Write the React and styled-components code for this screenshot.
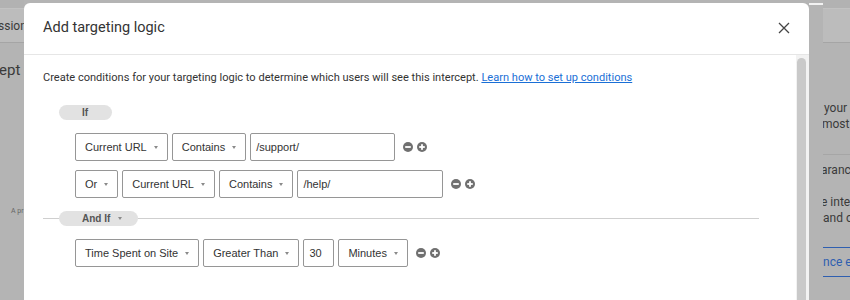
import React from 'react';
import styled, { createGlobalStyle } from 'styled-components';

const GlobalStyle = createGlobalStyle`
  html, body {
    margin: 0;
    padding: 0;
    background: #b4b4b4;
    overflow: hidden;
  }
  * { box-sizing: border-box; }
`;

const Page = styled.div`
  display: flex;
  width: 850px;
  height: 300px;
  overflow: hidden;
  background: #b4b4b4;
  font-family: Roboto, "Liberation Sans", sans-serif;
`;

// dimmed page behind the dialog
const BackStrip = styled.div`
  width: ${(p) => p.width}px;
  flex: ${(p) => (p.grow ? 1 : 'none')};
  display: flex;
  flex-direction: column;
  overflow: hidden;
  color: #3a3a3a;
  white-space: nowrap;
`;

const BackTopBand = styled.div`
  height: 9px;
  background: #b2b2b2;
  border-bottom: 1px solid #c2c2c2;
`;

const BackHeader = styled.div`
  height: 34px;
  display: flex;
  align-items: center;
  background: #bcbcbc;
  border-bottom: 1px solid #a5a5a5;
  font-size: 12px;
`;

const BackText = styled.div`
  font-size: ${(p) => p.size || 12}px;
  line-height: ${(p) => p.lh || 16}px;
  margin-top: ${(p) => p.mt || 0}px;
  margin-left: ${(p) => p.ml || 0}px;
  color: ${(p) => p.color || '#3a3a3a'};
`;

const BackRule = styled.div`
  height: 1px;
  background: ${(p) => p.color || '#a6a6a6'};
  margin-top: ${(p) => p.mt || 0}px;
`;

const CenterCol = styled.div`
  width: 785px;
  display: flex;
  flex-direction: column;
  padding-top: 3px;
`;

const Modal = styled.div`
  flex: 1;
  background: #fff;
  border-radius: 6px 6px 0 0;
  display: flex;
  flex-direction: column;
`;

const ModalHeader = styled.div`
  height: 52px;
  display: flex;
  align-items: center;
  justify-content: space-between;
  padding: 0 18px 0 19px;
  border-bottom: 1px solid #e6e6e6;
`;

const Title = styled.h2`
  margin: 0;
  font-size: 14.5px;
  font-weight: 400;
  color: #333;
  margin-top: -2px;
`;

const CloseBtn = styled.button`
  border: none;
  background: none;
  padding: 0;
  width: 14px;
  height: 14px;
  display: flex;
  align-items: center;
  justify-content: center;
  margin-top: -2px;
  cursor: pointer;
`;

const ModalBody = styled.div`
  flex: 1;
  display: flex;
`;

const Content = styled.div`
  flex: 1;
  padding: 15px 37px 0 19px;
`;

const Description = styled.p`
  margin: 0;
  font-size: 11.05px;
  line-height: 16px;
  color: #333;

  a {
    color: #1a6fd6;
    text-decoration: underline;
  }
`;

const Pill = styled.div`
  display: inline-flex;
  align-items: center;
  gap: 8px;
  height: 15px;
  padding: 0 ${(p) => p.pr}px 0 23px;
  border-radius: 8px;
  background: #e2e2e2;
  font-family: "Liberation Sans", Arial, sans-serif;
  font-weight: 700;
  font-size: 10px;
  color: #555;
`;

const PillRow = styled.div`
  margin: ${(p) => p.mt}px 0 0 16px;
  display: flex;
`;

const Divider = styled.div`
  margin-top: 13px;
  display: flex;
  padding-left: 16px;
  background: linear-gradient(#cfcfcf, #cfcfcf) left center / 100% 1px no-repeat;
`;

const Group = styled.div`
  margin: 13px 0 0 32px;
  display: flex;
  flex-direction: column;
  gap: 9px;
`;

const Row = styled.div`
  display: flex;
  align-items: center;
  gap: 4px;
  height: 28px;
`;

const Select = styled.div`
  height: 100%;
  display: flex;
  align-items: center;
  gap: 7px;
  padding: 0 9px 0 9px;
  border: 1px solid #969696;
  border-radius: 2px;
  font-family: "Liberation Sans", Arial, sans-serif;
  font-size: 11px;
  color: #333;
  white-space: nowrap;
`;

const Caret = styled.span`
  width: 0;
  height: 0;
  border-left: 2.5px solid transparent;
  border-right: 2.5px solid transparent;
  border-top: 3px solid #8a8a8a;
`;

const Input = styled.div`
  width: ${(p) => p.width}px;
  flex: none;
  height: 100%;
  display: flex;
  align-items: center;
  padding-left: 5px;
  border: 1px solid #969696;
  border-radius: 2px;
  font-family: "Liberation Sans", Arial, sans-serif;
  font-size: 11px;
  color: #333;
`;

const Actions = styled.div`
  display: flex;
  align-items: center;
  gap: 4px;
  margin-left: 4px;
`;

const ScrollTrack = styled.div`
  width: ${(p) => p.width}px;
  display: flex;
  padding: ${(p) => p.pad};
  background: #f2f2f2;
`;

const Thumb = styled.div`
  flex: 1;
  background: #c9c9c9;
  border-radius: 5px 5px 0 0;
`;

const OuterCol = styled.div`
  width: 14px;
  display: flex;
  flex-direction: column;
  padding-top: 3px;
`;

const Minus = () => (
  <svg width="10" height="10" viewBox="0 0 10 10">
    <circle cx="5" cy="5" r="5" fill="#707070" />
    <rect x="2.2" y="4.1" width="5.6" height="1.8" fill="#fff" />
  </svg>
);

const Plus = () => (
  <svg width="10" height="10" viewBox="0 0 10 10">
    <circle cx="5" cy="5" r="5" fill="#707070" />
    <rect x="2.2" y="4.1" width="5.6" height="1.8" fill="#fff" />
    <rect x="4.1" y="2.2" width="1.8" height="5.6" fill="#fff" />
  </svg>
);

const Dropdown = ({ children }) => (
  <Select>
    {children}
    <Caret />
  </Select>
);

const RowActions = () => (
  <Actions>
    <Minus />
    <Plus />
  </Actions>
);

const App = () => {
  return (
    <Page>
      <GlobalStyle />
      <BackStrip width={24}>
        <BackTopBand />
        <BackHeader>
          <BackText ml={-2}>ssion</BackText>
        </BackHeader>
        <BackText size={15} lh={20} mt={17} ml={-1}>ept</BackText>
        <BackText size={7} lh={10} mt={126} ml={11} color="#666">A pr</BackText>
      </BackStrip>

      <CenterCol>
        <Modal>
          <ModalHeader>
            <Title>Add targeting logic</Title>
            <CloseBtn aria-label="Close">
              <svg width="12" height="12" viewBox="0 0 12 12">
                <path d="M1 1 L11 11 M11 1 L1 11" stroke="#444" strokeWidth="1.3" />
              </svg>
            </CloseBtn>
          </ModalHeader>
          <ModalBody>
            <Content>
              <Description>
                Create conditions for your targeting logic to determine which users will see this intercept.{' '}
                <a href="#">Learn how to set up conditions</a>
              </Description>

              <PillRow mt={19}>
                <Pill pr={24}>If</Pill>
              </PillRow>

              <Group>
                <Row>
                  <Dropdown>Current URL</Dropdown>
                  <Dropdown>Contains</Dropdown>
                  <Input width={145}>/support/</Input>
                  <RowActions />
                </Row>
                <Row>
                  <Dropdown>Or</Dropdown>
                  <Dropdown>Current URL</Dropdown>
                  <Dropdown>Contains</Dropdown>
                  <Input width={146}>/help/</Input>
                  <RowActions />
                </Row>
              </Group>

              <Divider>
                <Pill pr={16}>
                  And If
                  <Caret />
                </Pill>
              </Divider>

              <Group>
                <Row>
                  <Dropdown>Time Spent on Site</Dropdown>
                  <Dropdown>Greater Than</Dropdown>
                  <Input width={31}>30</Input>
                  <Dropdown>Minutes</Dropdown>
                  <RowActions />
                </Row>
              </Group>
            </Content>
            <ScrollTrack width={13} pad="3px 3px 0 1px">
              <Thumb />
            </ScrollTrack>
          </ModalBody>
        </Modal>
      </CenterCol>

      <OuterCol>
        <ScrollTrack width={14} pad="2px 1px 0 3px">
          <Thumb />
        </ScrollTrack>
      </OuterCol>

      <BackStrip grow>
        <BackTopBand />
        <BackHeader />
        <BackText mt={57} ml={1}>your</BackText>
        <BackText ml={-1}>most v</BackText>
        <BackRule mt={22} />
        <BackText mt={7} ml={-2}>aranc</BackText>
        <BackText mt={16} ml={-2}>e inte</BackText>
        <BackText ml={0}>and o</BackText>
        <BackRule mt={21} color="#2f5fb0" />
        <BackText mt={6} color="#2f5fb0">nce e</BackText>
        <BackRule mt={6} color="#2f5fb0" />
      </BackStrip>
    </Page>
  );
};

export default App;
